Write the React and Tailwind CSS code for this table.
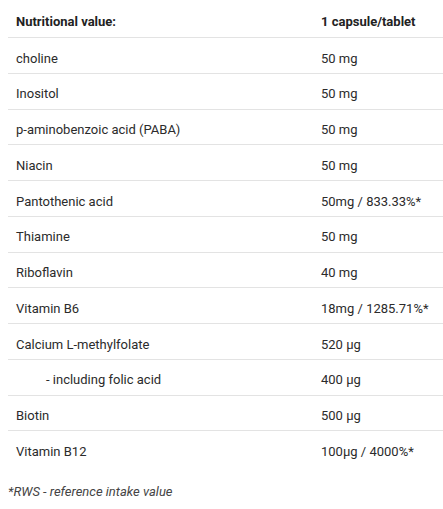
import React from 'react';

const rows = [
  ['choline', '50 mg'],
  ['Inositol', '50 mg'],
  ['p-aminobenzoic acid (PABA)', '50 mg'],
  ['Niacin', '50 mg'],
  ['Pantothenic acid', '50mg / 833.33%*'],
  ['Thiamine', '50 mg'],
  ['Riboflavin', '40 mg'],
  ['Vitamin B6', '18mg / 1285.71%*'],
  ['Calcium L-methylfolate', '520 µg'],
  ['- including folic acid', '400 µg', true],
  ['Biotin', '500 µg'],
  ['Vitamin B12', '100µg / 4000%*'],
];

const App = () => {
  return (
    <div className="pl-2 pt-[3px] text-[13px] text-[#2b2b2b] font-['Roboto',sans-serif]">
      {/* Table head */}
      <div className="grid grid-cols-[305px_1fr] h-[35px] pt-[4px] items-center border-b border-[#e3e3e3] font-bold text-[#222]">
        <div className="pl-2">Nutritional value:</div>
        <div className="pl-2">1 capsule/tablet</div>
      </div>

      {/* Rows */}
      {rows.map(([name, value, indent], index) => (
        <div
          key={index}
          className={`grid grid-cols-[305px_1fr] h-[35.75px] pt-[6px] items-center ${
            index < rows.length - 1 ? 'border-b border-[#e3e3e3]' : ''
          }`}
        >
          <div className={indent ? 'pl-[38px]' : 'pl-2'}>{name}</div>
          <div className="pl-2">{value}</div>
        </div>
      ))}

      <p className="mt-[15px] text-[13px] italic text-[#444]">*RWS - reference intake value</p>
    </div>
  );
};

export default App;
